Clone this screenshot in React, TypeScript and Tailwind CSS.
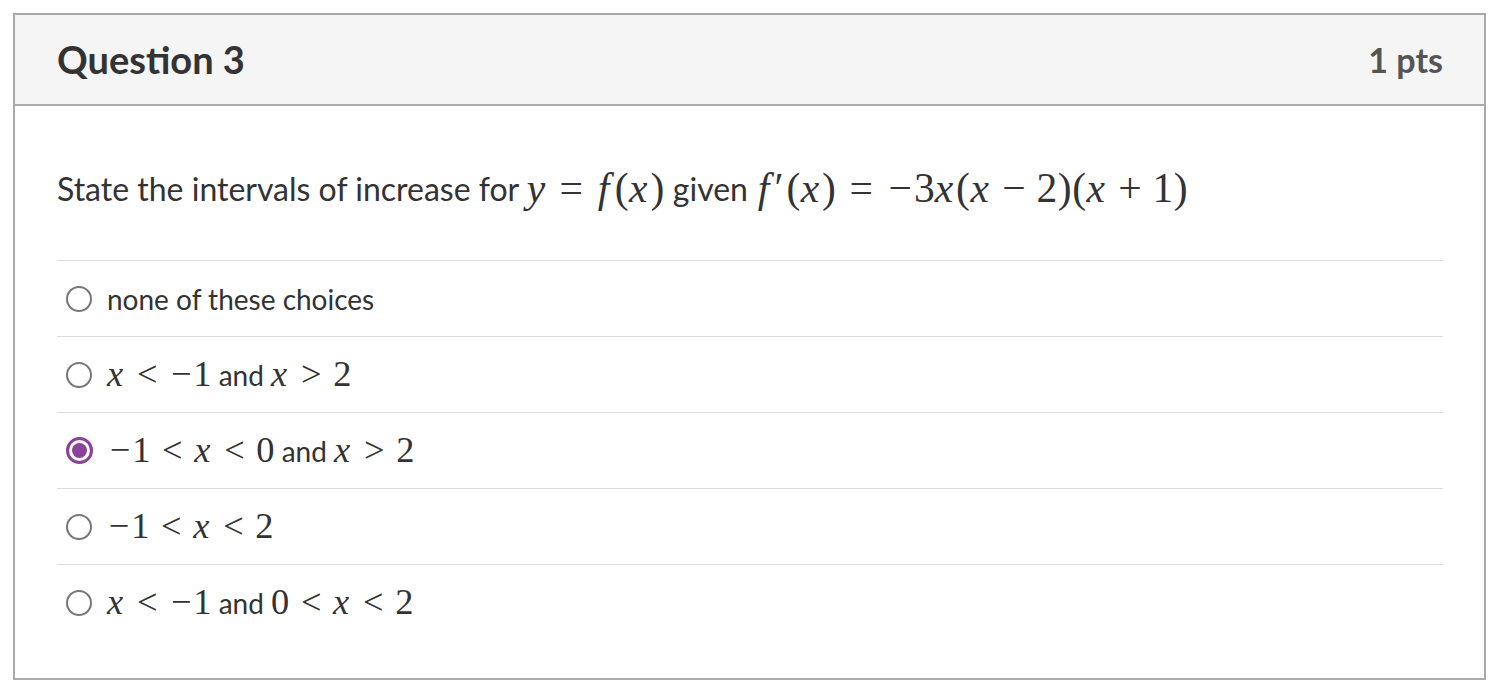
import React from "react";

const mathFont = { fontFamily: '"Liberation Serif", "DejaVu Serif", serif' };

function V({ c }: { c: string }) {
  const pad = c === "x" ? "pr-[0.06em]" : c === "f" ? "pl-[0.04em] pr-[0.12em]" : "pr-[0.02em]";
  return <span className={"italic " + pad}>{c}</span>;
}

function Rel({ c }: { c: string }) {
  return <span className="mx-[0.32em]">{c}</span>;
}

function Bin({ c }: { c: string }) {
  return <span className="mx-[0.26em]">{c}</span>;
}

function Neg() {
  return <span className="px-[0.05em]">−</span>;
}

function L() {
  return <span className="px-[0.01em]">(</span>;
}

function R() {
  return <span className="px-[0.01em]">)</span>;
}

function M({ children }: { children: React.ReactNode }) {
  return (
    <span className="text-[1.3em] leading-none whitespace-nowrap" style={mathFont}>
      {children}
    </span>
  );
}

function Radio({ checked }: { checked?: boolean }) {
  if (checked) {
    return (
      <span className="flex h-[27px] w-[27px] shrink-0 items-center justify-center rounded-full border-[3px] border-[#8c3f9b] bg-white">
        <span className="h-[15px] w-[15px] rounded-full bg-[#8b4298]" />
      </span>
    );
  }
  return <span className="block h-[26px] w-[26px] shrink-0 rounded-full border-2 border-[#777] bg-white" />;
}

function Option({ checked, children }: { checked?: boolean; children: React.ReactNode }) {
  return (
    <div className="flex h-[76px] items-center border-t-[1.5px] border-[#dcdcdc] pl-[9px]">
      <Radio checked={checked} />
      <div className="ml-[15px] flex items-center text-[28px] text-[#333]">{children}</div>
    </div>
  );
}

export default function App() {
  return (
    <div className="min-h-[700px] bg-white pl-[13px] pt-[13px]" style={{ fontFamily: 'Lato, "Noto Sans", sans-serif' }}>
      <div className="w-[1473px] border-2 border-[#aaaaaa] bg-white">
        <div className="flex h-[91px] items-center justify-between border-b-2 border-[#aaaaaa] bg-[#f5f5f5] pl-[42px] pr-[41px]">
          <div className="text-[38px] font-bold text-[#333]">Question 3</div>
          <div className="text-[34px] font-bold text-[#555]">1 pts</div>
        </div>
        <div className="px-[41px] pl-[42px] pb-[38px] pt-[62px]">
          <div className="flex items-center text-[32px] leading-[42px] text-[#333]">
            <span>State the intervals of increase for&nbsp;</span>
            <M>
              <V c="y" />
              <Rel c="=" />
              <V c="f" />
              <L />
              <V c="x" />
              <R />
            </M>
            <span>&nbsp;given&nbsp;</span>
            <M>
              <V c="f" />
              <span className="pr-[0.06em]">′</span>
              <L />
              <V c="x" />
              <R />
              <Rel c="=" />
              <Neg />3<V c="x" />
              <L />
              <V c="x" />
              <Bin c="−" />
              2<R />
              <L />
              <V c="x" />
              <Bin c="+" />
              1<R />
            </M>
          </div>
          <div className="mt-[50px]">
            <Option>
              <span>none of these choices</span>
            </Option>
            <Option>
              <M>
                <V c="x" />
                <Rel c="<" />
                <Neg />1
              </M>
              <span>&nbsp;and&nbsp;</span>
              <M>
                <V c="x" />
                <Rel c=">" />2
              </M>
            </Option>
            <Option checked>
              <M>
                <Neg />1
                <Rel c="<" />
                <V c="x" />
                <Rel c="<" />0
              </M>
              <span>&nbsp;and&nbsp;</span>
              <M>
                <V c="x" />
                <Rel c=">" />2
              </M>
            </Option>
            <Option>
              <M>
                <Neg />1
                <Rel c="<" />
                <V c="x" />
                <Rel c="<" />2
              </M>
            </Option>
            <Option>
              <M>
                <V c="x" />
                <Rel c="<" />
                <Neg />1
              </M>
              <span>&nbsp;and&nbsp;</span>
              <M>
                0
                <Rel c="<" />
                <V c="x" />
                <Rel c="<" />2
              </M>
            </Option>
          </div>
        </div>
      </div>
    </div>
  );
}
